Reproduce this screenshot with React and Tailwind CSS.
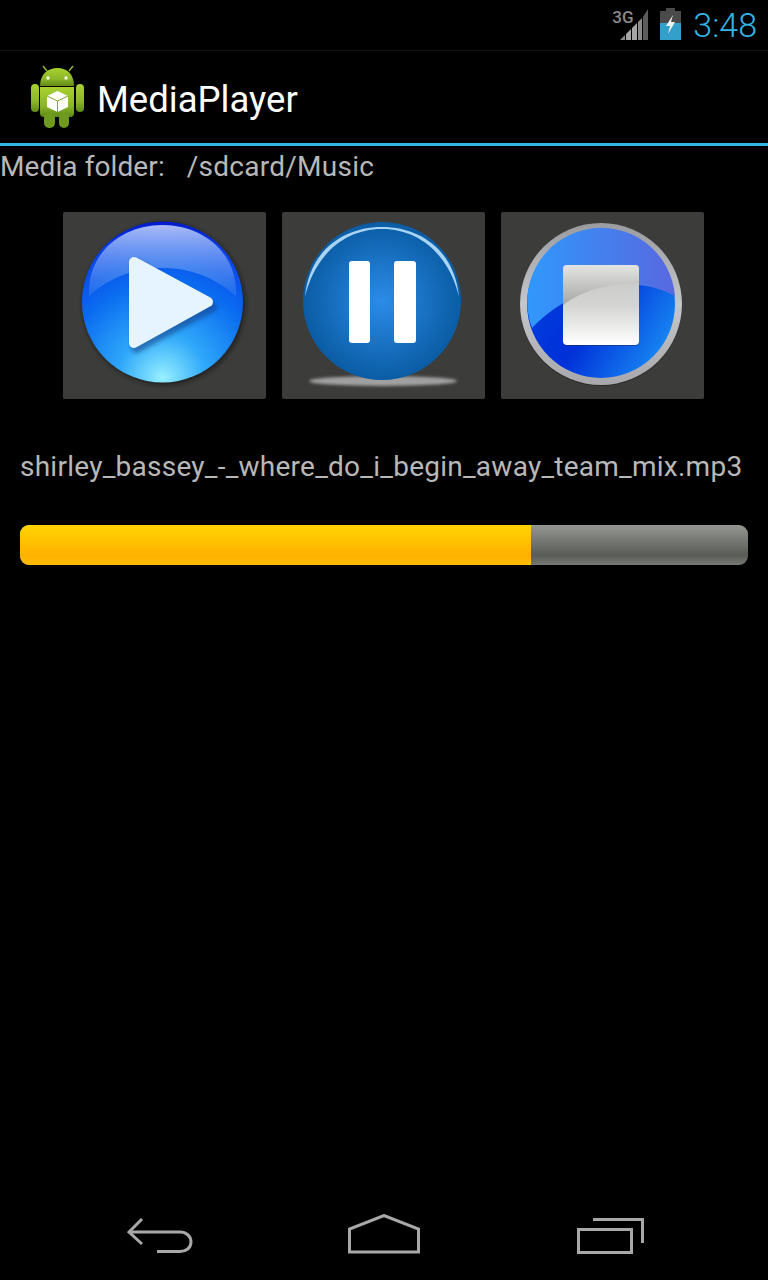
import React from 'react'

function SignalIcon() {
  return (
    <svg width="28" height="32" viewBox="0 0 28 32">
      <polygon points="0,31 5,26 5,31" fill="#8a8a8a" />
      <polygon points="6,25 11,20 11,31 6,31" fill="#a6a6a6" />
      <polygon points="12,19 17,14 17,31 12,31" fill="#a6a6a6" />
      <polygon points="18,13 22,9 22,31 18,31" fill="#8c8c8c" />
      <polygon points="23,8 28,0 28,31 23,31" fill="#5c5c5c" />
    </svg>
  )
}

function BatteryIcon() {
  return (
    <svg width="21" height="32" viewBox="0 0 21 32">
      <rect x="6" y="0" width="9" height="4" fill="#4a4a4a" />
      <rect x="0" y="3" width="21" height="29" fill="#4a4a4a" />
      <rect x="0" y="15" width="21" height="17" fill="#33a0cc" />
      <polygon points="13,7 6,18 10,18 8,26 15,14 11,14" fill="#f2f2f2" />
    </svg>
  )
}

function AndroidLogo() {
  return (
    <svg width="56" height="64" viewBox="0 0 56 64">
      <defs>
        <linearGradient id="droid" x1="0" y1="0" x2="0" y2="1">
          <stop offset="0" stopColor="#a8d030" />
          <stop offset="0.6" stopColor="#8cb828" />
          <stop offset="1" stopColor="#5f8a18" />
        </linearGradient>
      </defs>
      <path d="M17 6 L13 1 M39 6 L43 1" stroke="#8cb828" strokeWidth="1.5" />
      <path d="M10 21 C10 9 18 3 27.5 3 C37 3 44 9 44 21 Z" fill="url(#droid)" />
      <path d="M10 22 H44 V48 Q44 52 40 52 H14 Q10 52 10 48 Z" fill="url(#droid)" />
      <rect x="1" y="19" width="8" height="28" rx="4" fill="url(#droid)" />
      <rect x="46" y="19" width="8" height="28" rx="4" fill="url(#droid)" />
      <rect x="14" y="48" width="11" height="15" rx="5" fill="#6f9a1e" />
      <rect x="29" y="48" width="10" height="15" rx="5" fill="#6f9a1e" />
      <circle cx="18" cy="13" r="1.7" fill="#f4f8e0" />
      <circle cx="36" cy="13" r="1.7" fill="#f4f8e0" />
      <polygon points="27.5,26 38,31 38,42 27.5,47 17,42 17,31" fill="#ffffff" />
      <path d="M17 31 L27.5 36 L38 31 M27.5 36 V47" stroke="#7fa828" strokeWidth="1" fill="none" />
    </svg>
  )
}

function PlayIcon() {
  return (
    <svg width="203" height="187" viewBox="0 0 203 187">
      <defs>
        <radialGradient id="playBase" cx="0.5" cy="0.97" r="0.97">
          <stop offset="0" stopColor="#96f0ff" />
          <stop offset="0.28" stopColor="#2fa8fa" />
          <stop offset="0.62" stopColor="#0a6cf0" />
          <stop offset="0.9" stopColor="#0a40e8" />
          <stop offset="1" stopColor="#0018c8" />
        </radialGradient>
        <linearGradient id="playGloss" x1="0" y1="0" x2="0" y2="1">
          <stop offset="0" stopColor="#b4c4fa" stopOpacity="0.95" />
          <stop offset="1" stopColor="#5c9cf0" stopOpacity="0.25" />
        </linearGradient>
        <filter id="softPlay" x="-20%" y="-20%" width="140%" height="140%">
          <feGaussianBlur stdDeviation="2" />
        </filter>
      </defs>
      <circle cx="101" cy="92" r="81" fill="#141414" opacity="0.7" filter="url(#softPlay)" />
      <circle cx="99.5" cy="90" r="80.5" fill="url(#playBase)" />
      <path d="M26 84 C24 40 60 13 99.5 13 C139 13 175 40 173 84 C150 64 125 56 99.5 56 C74 56 48 64 26 84 Z" fill="url(#playGloss)" />
      <path d="M71 50 L147 92 L71 133 Z" fill="#123c80" opacity="0.55" strokeLinejoin="round" stroke="#123c80" strokeWidth="10" transform="translate(2 3)" filter="url(#softPlay)" />
      <path d="M71 50 L145 90 L71 131 Z" fill="#e6f4ff" stroke="#e6f4ff" strokeWidth="10" strokeLinejoin="round" />
    </svg>
  )
}

function PauseIcon() {
  return (
    <svg width="203" height="187" viewBox="0 0 203 187">
      <defs>
        <radialGradient id="pauseBase" cx="0.5" cy="0.5" r="0.5">
          <stop offset="0" stopColor="#2c8ce8" />
          <stop offset="1" stopColor="#0a5ca4" />
        </radialGradient>
        <filter id="softPause" x="-10%" y="-60%" width="120%" height="220%">
          <feGaussianBlur stdDeviation="1.5" />
        </filter>
      </defs>
      <ellipse cx="101" cy="169" rx="74" ry="5" fill="#a0a0a0" filter="url(#softPause)" />
      <circle cx="100" cy="89" r="79" fill="url(#pauseBase)" />
      <path d="M23 85 C27 40 60 15 100 15 C140 15 173 40 177 85 C168 46 140 17 100 17 C60 17 32 46 23 85 Z" fill="#a8d4f4" />
      <rect x="67" y="49" width="21" height="82" rx="3" fill="#ffffff" />
      <rect x="112" y="49" width="22" height="82" rx="3" fill="#ffffff" />
    </svg>
  )
}

function StopIcon() {
  return (
    <svg width="203" height="187" viewBox="0 0 203 187">
      <defs>
        <linearGradient id="stopRing" x1="0" y1="0" x2="0" y2="1">
          <stop offset="0" stopColor="#9a9ca0" />
          <stop offset="0.5" stopColor="#c4c6ca" />
          <stop offset="1" stopColor="#a8a8ac" />
        </linearGradient>
        <linearGradient id="stopLow" x1="0" y1="0.3" x2="1" y2="0.9">
          <stop offset="0" stopColor="#0040e0" />
          <stop offset="0.45" stopColor="#0030d8" />
          <stop offset="1" stopColor="#1c98f8" />
        </linearGradient>
        <linearGradient id="stopHigh" x1="0" y1="0.5" x2="1" y2="0.5">
          <stop offset="0" stopColor="#3098fc" />
          <stop offset="1" stopColor="#5868e0" />
        </linearGradient>
        <linearGradient id="stopSquare" x1="0" y1="0" x2="0" y2="1">
          <stop offset="0" stopColor="#c4c4c2" />
          <stop offset="0.5" stopColor="#d4d4d2" />
          <stop offset="1" stopColor="#ffffff" />
        </linearGradient>
        <linearGradient id="stopSquareGloss" x1="0" y1="0" x2="0" y2="1">
          <stop offset="0" stopColor="#e4e4e2" />
          <stop offset="1" stopColor="#a6a6a4" />
        </linearGradient>
      </defs>
      <circle cx="100" cy="93" r="81" fill="#1a1a1a" opacity="0.5" />
      <circle cx="100" cy="92" r="81" fill="url(#stopRing)" />
      <circle cx="100" cy="92" r="74" fill="url(#stopLow)" />
      <path d="M31 116 A74 74 0 1 1 174 84 C130 60 70 75 31 116 Z" fill="url(#stopHigh)" />
      <rect x="62" y="54" width="76" height="80" rx="4" fill="#14346c" opacity="0.6" />
      <rect x="62" y="53" width="76" height="80" rx="4" fill="url(#stopSquare)" />
      <path d="M62 93 V57 Q62 53 66 53 H134 Q138 53 138 57 V72 C110 70 82 78 62 93 Z" fill="url(#stopSquareGloss)" />
    </svg>
  )
}

function BackIcon() {
  return (
    <svg width="66" height="36" viewBox="0 0 66 36" fill="none" stroke="#a8a8a8" strokeWidth="3">
      <path d="M15 1 L2 14 L15 26" />
      <path d="M3 14 H53 C59 14 64 18 64 24 C64 30 59 33.5 53 33.5 H30" />
    </svg>
  )
}

function HomeIcon() {
  return (
    <svg width="72" height="40" viewBox="0 0 72 40" fill="none" stroke="#a8a8a8" strokeWidth="3">
      <path d="M1.5 38 V15 L36 1.5 L70.5 15 V38 Z" />
    </svg>
  )
}

function RecentsIcon() {
  return (
    <svg width="67" height="36" viewBox="0 0 67 36" fill="none" stroke="#a8a8a8" strokeWidth="3">
      <rect x="1.5" y="11.5" width="53" height="23" />
      <path d="M16 1.5 H65.5 V25" />
    </svg>
  )
}

export default function App() {
  return (
    <div className="w-[768px] h-[1280px] bg-black flex flex-col font-['Roboto',sans-serif]">
      {/* status bar */}
      <div className="h-[51px] shrink-0 flex items-start justify-end border-b border-[#111111] pr-[11px]">
        <div className="flex items-start mt-[9px]">
          <span className="text-[17px] leading-[17px] font-medium text-[#8a8a8a] mr-[-10px] w-[18px]">3G</span>
          <SignalIcon />
        </div>
        <div className="mt-[8px] ml-[12px]">
          <BatteryIcon />
        </div>
        <span className="text-[34px] leading-[50px] font-light text-[#33b5e5] ml-[12px]">3:48</span>
      </div>

      {/* action bar */}
      <div className="h-[92px] shrink-0 flex items-center pl-[30px]">
        <AndroidLogo />
        <span className="text-[36.5px] text-white ml-[11px] mt-[6px]">MediaPlayer</span>
      </div>
      <div className="h-[3px] shrink-0 bg-[#33b5e5]" />

      {/* media folder */}
      <div className="flex text-[28px] leading-[41px] text-[#b8b8b8]">
        <span className="tracking-[0.1px]">Media folder:</span>
        <span className="tracking-[0.25px] ml-[22px]">/sdcard/Music</span>
      </div>

      {/* transport buttons */}
      <div className="flex gap-[16px] mt-[25px] pl-[63px]">
        <button className="w-[203px] h-[187px] rounded-[2px] bg-[#3c3d3b]"><PlayIcon /></button>
        <button className="w-[203px] h-[187px] rounded-[2px] bg-[#3c3d3b]"><PauseIcon /></button>
        <button className="w-[203px] h-[187px] rounded-[2px] bg-[#3c3d3b]"><StopIcon /></button>
      </div>

      <div className="text-[28px] tracking-[0.25px] leading-[40px] text-[#b8b8b8] pl-[20px] mt-[48px]">
        shirley_bassey_-_where_do_i_begin_away_team_mix.mp3
      </div>

      {/* progress */}
      <div className="mx-[20px] mt-[38px] h-[40px] rounded-[9px] overflow-hidden bg-[linear-gradient(180deg,#949692_0%,#5a5c58_75%,#767875_100%)]">
        <div className="w-[511px] h-full bg-[linear-gradient(180deg,#ffd400_0%,#ffb200_75%,#ffbc00_100%)]" />
      </div>

      {/* nav bar */}
      <div className="mt-auto mb-[26px] flex items-end pl-[127px]">
        <BackIcon />
        <div className="ml-[155px]"><HomeIcon /></div>
        <div className="ml-[157px]"><RecentsIcon /></div>
      </div>
    </div>
  )
}
